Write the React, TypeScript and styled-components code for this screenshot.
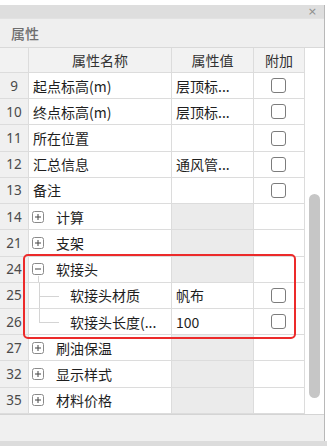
import { FC } from "react";
import styled, { createGlobalStyle, css } from "styled-components";

const GlobalStyle = createGlobalStyle`
  html, body {
    margin: 0;
    padding: 0;
    background: #fff;
  }
  body {
    font-family: "Noto Sans CJK SC", "Noto Sans", sans-serif;
  }
`;

type RowKind = "item" | "group" | "child";

type Row = {
  no: number;
  name: string;
  value?: string;
  check?: boolean;
  kind: RowKind;
  open?: boolean;
  last?: boolean;
};

const rows: Row[] = [
  { no: 9, name: "起点标高(m)", value: "层顶标...", check: true, kind: "item" },
  { no: 10, name: "终点标高(m)", value: "层顶标...", check: true, kind: "item" },
  { no: 11, name: "所在位置", check: true, kind: "item" },
  { no: 12, name: "汇总信息", value: "通风管...", check: true, kind: "item" },
  { no: 13, name: "备注", check: true, kind: "item" },
  { no: 14, name: "计算", kind: "group" },
  { no: 21, name: "支架", kind: "group" },
  { no: 24, name: "软接头", kind: "group", open: true },
  { no: 25, name: "软接头材质", value: "帆布", check: true, kind: "child" },
  { no: 26, name: "软接头长度(...", value: "100", check: true, kind: "child", last: true },
  { no: 27, name: "刷油保温", kind: "group" },
  { no: 32, name: "显示样式", kind: "group" },
  { no: 35, name: "材料价格", kind: "group" },
];

const ToggleBox: FC<{ open?: boolean }> = ({ open }) => (
  <Toggle $open={open}>
    <svg width="12" height="12" viewBox="0 0 12 12">
      <rect x="0.5" y="0.5" width="11" height="11" rx="2" fill="#fff" stroke="#8a8a8a" />
      <line x1="3" y1="6" x2="9" y2="6" stroke="#444" strokeWidth="1" />
      {!open && <line x1="6" y1="3" x2="6" y2="9" stroke="#444" strokeWidth="1" />}
    </svg>
  </Toggle>
);

const App: FC = () => {
  return (
    <>
      <GlobalStyle />
      <Page>
        <Panel>
          <TitleBar>
            <Close>×</Close>
          </TitleBar>
          <Caption>属性</Caption>
          <Body>
            <Table>
              <HeadCell />
              <HeadCell>属性名称</HeadCell>
              <HeadCell>属性值</HeadCell>
              <HeadCell>附加</HeadCell>
              {rows.map((row) => (
                <RowGroup key={row.no}>
                  <NoCell>{row.no}</NoCell>
                  <NameCell>
                    {row.kind === "group" && <ToggleBox open={row.open} />}
                    {row.kind === "child" && <Guide $last={row.last} />}
                    <NameText $kind={row.kind}>{row.name}</NameText>
                  </NameCell>
                  <ValueCell $muted={row.kind === "group"}>{row.value}</ValueCell>
                  <CheckCell>{row.check && <CheckBox />}</CheckCell>
                </RowGroup>
              ))}
              <Highlight />
            </Table>
            <ScrollTrack>
              <ScrollThumb />
            </ScrollTrack>
          </Body>
          <Footer />
        </Panel>
        <BottomStrip />
      </Page>
    </>
  );
};

export default App;

const ROW_H = 26.23;

const Page = styled.div`
  width: 327px;
  height: 446px;
  display: flex;
  flex-direction: column;
`;

const Panel = styled.div`
  box-sizing: border-box;
  width: 325px;
  flex: 1;
  margin-top: 5px;
  display: flex;
  flex-direction: column;
  border-right: 1px solid #b8b8b8;
  background: #f0f0f0;
`;

const TitleBar = styled.div`
  height: 13px;
  background: #dedede;
  display: flex;
  align-items: center;
  justify-content: flex-end;
  padding-right: 7px;
`;

const Close = styled.span`
  font-family: "DejaVu Sans", sans-serif;
  font-size: 11px;
  line-height: 1;
  color: #8c8c8c;
`;

const Caption = styled.div`
  box-sizing: border-box;
  height: 29px;
  padding-left: 11px;
  display: flex;
  align-items: center;
  background: #efefef;
  border-top: 1px solid #e2e2e2;
  font-size: 14px;
  font-weight: 500;
  color: #6e6e6e;
`;

const Body = styled.div`
  display: flex;
  background: #fff;
  border-top: 1px solid #d9d9d9;
`;

const Table = styled.div`
  position: relative;
  width: 305px;
  display: grid;
  grid-template-columns: 29px 143px 82px 51px;
  grid-template-rows: 25px;
  grid-auto-rows: ${ROW_H}px;
`;

const RowGroup = styled.div`
  display: contents;
`;

const cellBase = css`
  box-sizing: border-box;
  border-right: 1px solid #dcdcdc;
  border-bottom: 1px solid #dcdcdc;
  display: flex;
  align-items: center;
  min-width: 0;
  overflow: hidden;
  white-space: nowrap;
`;

const HeadCell = styled.div`
  ${cellBase};
  justify-content: center;
  background: #f2f2f2;
  font-size: 14px;
  color: #333;
`;

const NoCell = styled.div`
  ${cellBase};
  justify-content: center;
  background: #f0f0f0;
  font-family: "Noto Sans", sans-serif;
  font-size: 13.5px;
  color: #4a4a4a;
`;

const NameCell = styled.div`
  ${cellBase};
  padding-left: 4px;
  font-size: 14px;
  color: #1e1e1e;
`;

const NameText = styled.span<{ $kind: RowKind }>`
  margin-left: ${({ $kind }) => ($kind === "group" ? 12 : $kind === "child" ? 11 : 0)}px;
`;

const Toggle = styled.span<{ $open?: boolean }>`
  position: relative;
  display: flex;
  width: 12px;
  height: 12px;
  margin-left: -1px;

  ${({ $open }) =>
    $open &&
    css`
      &::after {
        content: "";
        position: absolute;
        left: 6px;
        top: 13px;
        height: 12px;
        border-left: 1px solid #d4d4d4;
      }
    `}
`;

const Guide = styled.span<{ $last?: boolean }>`
  position: relative;
  align-self: stretch;
  width: 20px;
  margin-left: 6px;
  margin-bottom: -1px;

  &::before {
    content: "";
    position: absolute;
    left: 0;
    top: 0;
    height: ${({ $last }) => ($last ? "50%" : "100%")};
    border-left: 1px solid #d4d4d4;
  }

  &::after {
    content: "";
    position: absolute;
    left: 0;
    top: 50%;
    width: 20px;
    border-top: 1px solid #d4d4d4;
  }
`;

const ValueCell = styled.div<{ $muted?: boolean }>`
  ${cellBase};
  padding-left: 4px;
  font-size: 14px;
  color: #1e1e1e;
  background: ${({ $muted }) => ($muted ? "#ebebeb" : "#fff")};
`;

const CheckCell = styled.div`
  ${cellBase};
  justify-content: center;
  padding-right: 2px;
`;

const CheckBox = styled.span`
  box-sizing: border-box;
  width: 15px;
  height: 15px;
  border: 1px solid #7c7c7c;
  border-radius: 3px;
  background: #fff;
`;

const Highlight = styled.div`
  position: absolute;
  left: 23px;
  top: 206px;
  width: 273px;
  height: 85px;
  box-sizing: border-box;
  border: 2.5px solid #ec2a2a;
  border-radius: 5px;
  pointer-events: none;
`;

const ScrollTrack = styled.div`
  flex: 1;
  display: flex;
  flex-direction: column;
  align-items: center;
  background: #fff;
`;

const ScrollThumb = styled.div`
  width: 11px;
  height: 204px;
  margin-top: 146px;
  border-radius: 6px;
  background: #c6c6c6;
`;

const Footer = styled.div`
  flex: 1;
  background: #f0f0f0;
  border-top: 1px solid #d4d4d4;
`;

const BottomStrip = styled.div`
  height: 5px;
  background: #dcdcdc;
`;
